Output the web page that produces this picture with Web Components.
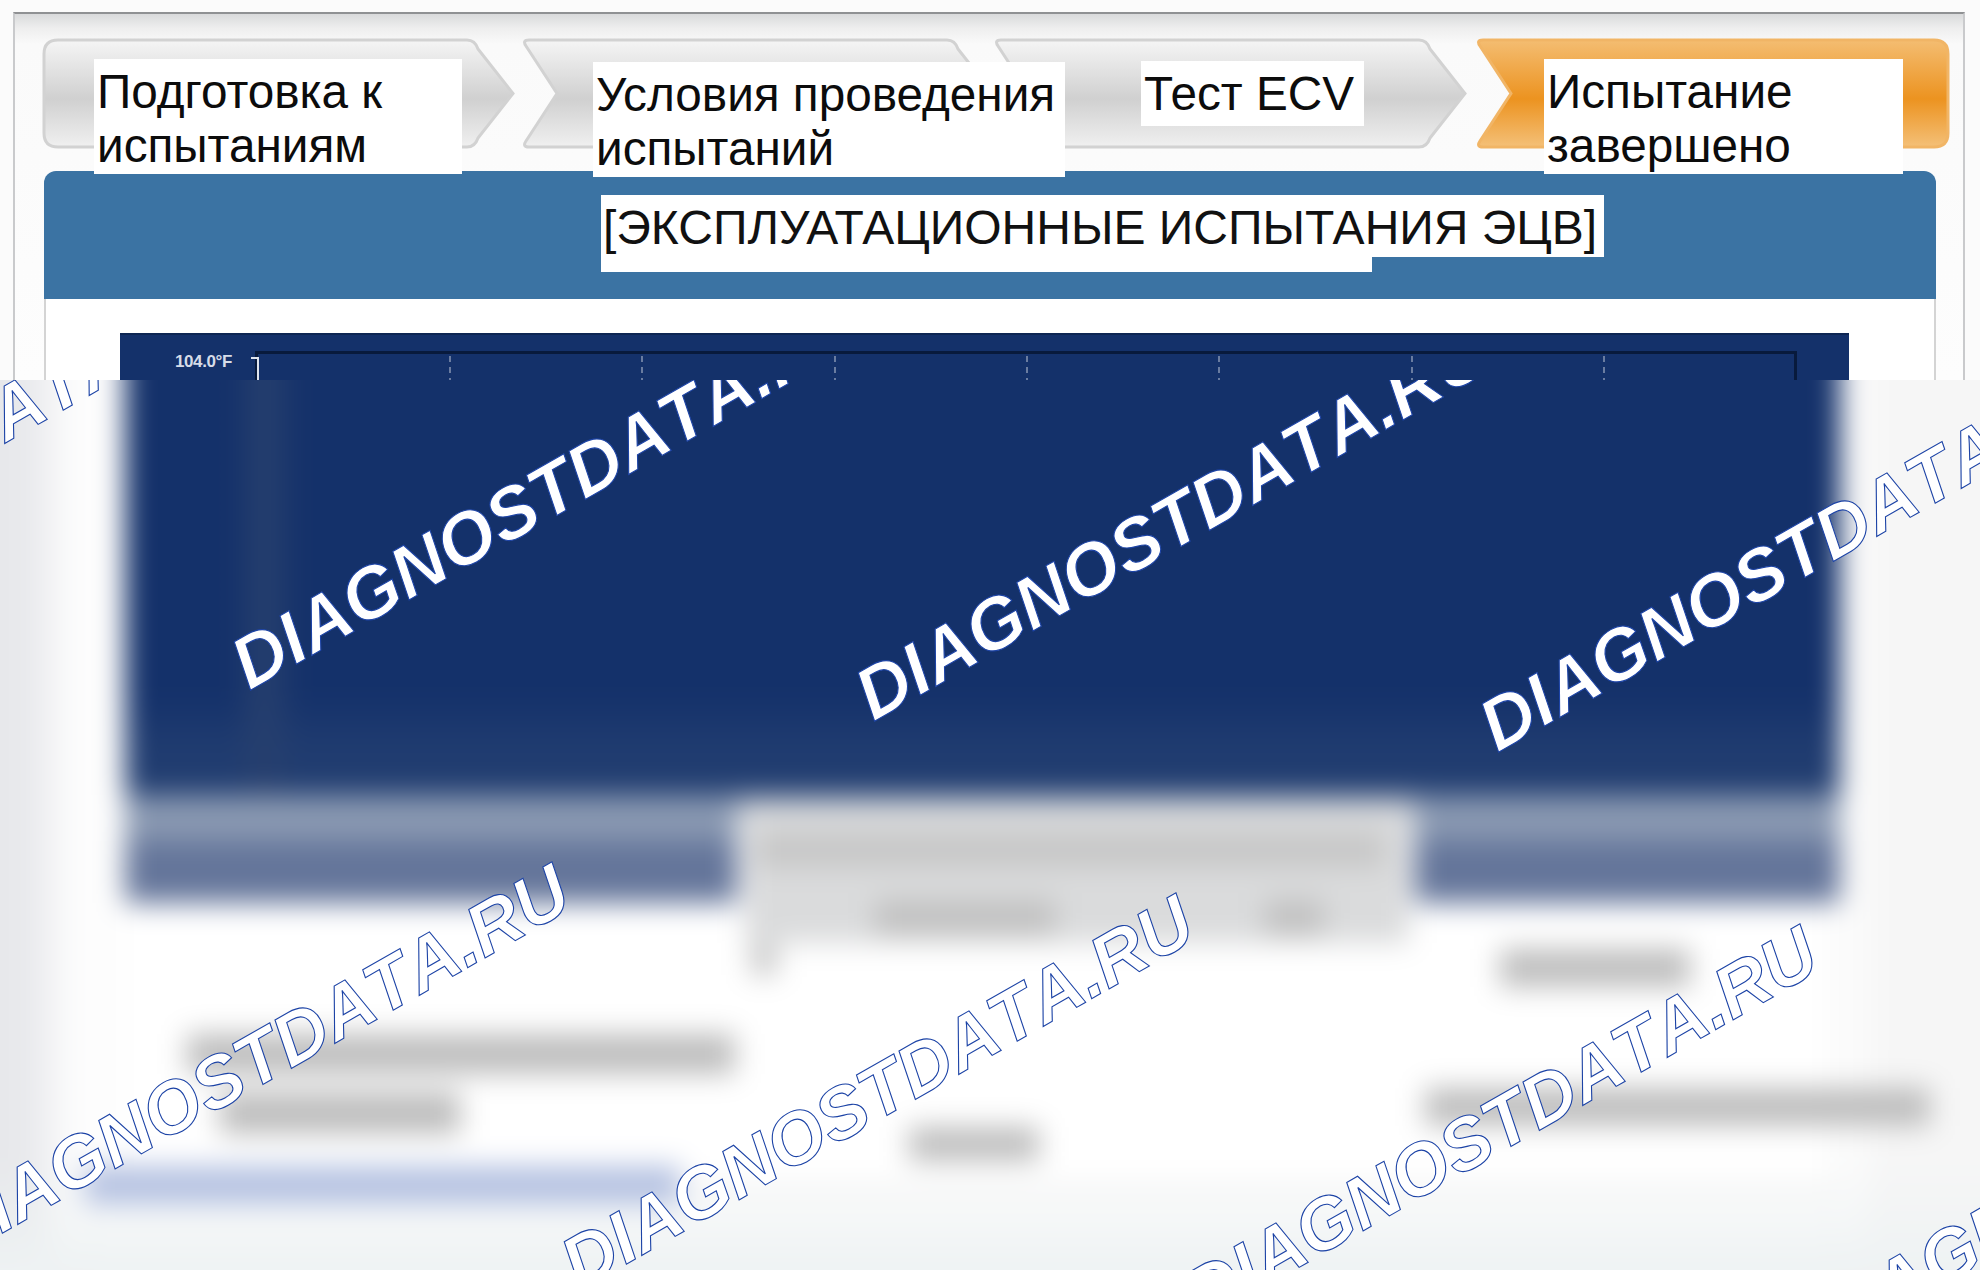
<!DOCTYPE html>
<html lang="ru">
<head>
<meta charset="utf-8">
<title>Эксплуатационные испытания ЭЦВ</title>
<style>
  html, body { margin:0; padding:0; background:#fbfbfb; }
  body { width:1980px; height:1270px; overflow:hidden; font-family:"Liberation Sans", Arial, sans-serif; }
</style>
</head>
<body>
<report-page>
  <report-steps slot="steps">
    <step-chevron width="469" kind="first" lx="50" ly="19" lw="368" lh="115">Подготовка к<br>испытаниям</step-chevron>
    <step-chevron width="470" kind="mid" lx="70" ly="22" lw="472" lh="115" gap="10">Условия проведения<br>испытаний</step-chevron>
    <step-chevron width="470" kind="mid" lx="146" ly="21" lw="223" lh="65" gap="2">Тест ECV</step-chevron>
    <step-chevron width="471" kind="last" lx="67" ly="19" lw="359" lh="115" gap="12">Испытание<br>завершено</step-chevron>
  </report-steps>
  <panel-head slot="head">[ЭКСПЛУАТАЦИОННЫЕ ИСПЫТАНИЯ ЭЦВ]</panel-head>
  <chart-top slot="chart"></chart-top>

  <blur-zone slot="blur">
    <water-mark x="-375" y="659"></water-mark>
    <water-mark x="249" y="690"></water-mark>
    <water-mark x="873" y="721"></water-mark>
    <water-mark x="1497" y="752"></water-mark>
    <water-mark x="-45" y="1259"></water-mark>
    <water-mark x="579" y="1290"></water-mark>
    <water-mark x="1203" y="1321"></water-mark>
    <water-mark x="1827" y="1352"></water-mark>
  </blur-zone>
</report-page>

<script>
// top part of the page, sharp, then the blurred rest
class ReportPage extends HTMLElement {
  constructor() {
    super();
    this.attachShadow({ mode: 'open' });
    this.shadowRoot.innerHTML = `
      <style>
        :host { display:block; width:1980px; height:1270px; overflow:hidden; }
        .top { height:380px; box-sizing:border-box; padding:12px 15px 0 13px; overflow:hidden; background:#fbfbfb; }
        .frame {
          height:368px; box-sizing:border-box; padding:24px 17px 0 29px;
          border:solid #c9cacc; border-width:2px 2px 0 2px; border-top-color:#8f9193;
          background:linear-gradient(180deg,#d9dadb 0,#eeeeee 14px,#fafafa 30px,#fdfdfd 100%);
        }
        .body {
          height:83px; margin-right:10px; box-sizing:border-box; padding:34px 0 0 74px;
          background:#fff; border-left:2px solid #d4d4d4; border-right:2px solid #d4d4d4;
        }
      </style>
      <div class="top">
        <div class="frame">
          <slot name="steps"></slot>
          <slot name="head"></slot>
          <div class="body"><slot name="chart"></slot></div>
        </div>
      </div>
      <slot name="blur"></slot>
    `;
  }
}

class ReportSteps extends HTMLElement {
  constructor() {
    super();
    this.attachShadow({ mode: 'open' });
    this.shadowRoot.innerHTML = `
      <style>:host { display:flex; height:109px; margin-bottom:24px; }</style>
      <slot></slot>
    `;
  }
}

// one arrow of the wizard, the white box with its text sits on top
class StepChevron extends HTMLElement {
  constructor() {
    super();
    this.attachShadow({ mode: 'open' });
  }

  connectedCallback() {
    const w = +this.getAttribute('width');
    const kind = this.getAttribute('kind');
    const h = 107, m = 53.5, r = 14, tip = 46, notch = 34;
    const tail = `H${w - tip} Q${w - tip + 8} 0 ${w - tip + 11} 9 L${w} ${m} L${w - tip + 11} ${h - 9} Q${w - tip + 8} ${h} ${w - tip} ${h}`;
    let d;
    if (kind === 'first') {
      d = `M${r} 0 ${tail} H${r} Q0 ${h} 0 ${h - r} V${r} Q0 0 ${r} 0Z`;
    } else if (kind === 'mid') {
      d = `M6 0 ${tail} H6 Q-1 ${h} 3 ${h - 6} L${notch} ${m} L3 6 Q-1 0 6 0Z`;
    } else {
      d = `M6 0 H${w - r} Q${w} 0 ${w} ${r} V${h - r} Q${w} ${h} ${w - r} ${h} H6 Q-1 ${h} 3 ${h - 6} L${notch} ${m} L3 6 Q-1 0 6 0Z`;
    }
    const stops = kind === 'last'
      ? '<stop offset="0" stop-color="#f4bd72"/><stop offset=".55" stop-color="#ec9320"/><stop offset="1" stop-color="#f4c078"/>'
      : '<stop offset="0" stop-color="#f5f5f5"/><stop offset=".55" stop-color="#d0d0d0"/><stop offset="1" stop-color="#f0f0f0"/>';
    const line = kind === 'last' ? '#f1b566' : '#d2d2d2';
    this.shadowRoot.innerHTML = `
      <style>
        :host {
          display:block; flex:none; position:relative; height:107px; box-sizing:border-box;
          width:${w}px; margin:2px 0 0 ${this.getAttribute('gap') || 0}px;
          padding:${this.getAttribute('ly')}px 0 0 ${this.getAttribute('lx')}px;
        }
        svg { position:absolute; left:0; top:0; overflow:visible; }
        .label {
          position:relative; z-index:2; box-sizing:border-box; background:#fff; color:#0c0c0c;
          width:${this.getAttribute('lw')}px; height:${this.getAttribute('lh')}px;
          padding:6px 0 0 3px; font:47.7px/54px "Liberation Sans", Arial, sans-serif; white-space:nowrap;
        }
      </style>
      <svg width="${w}" height="${h}" viewBox="0 0 ${w} ${h}">
        <defs><linearGradient id="g" x1="0" y1="0" x2="0" y2="1">${stops}</linearGradient></defs>
        <path d="${d}" fill="url(#g)" stroke="${line}" stroke-width="3"/>
      </svg>
      <div class="label"><slot></slot></div>
    `;
  }
}

class PanelHead extends HTMLElement {
  constructor() {
    super();
    this.attachShadow({ mode: 'open' });
    this.shadowRoot.innerHTML = `
      <style>
        :host {
          display:block; height:128px; margin-right:10px; box-sizing:border-box; padding:24px 0 0 557px;
          background:#3b73a3; border-radius:12px 12px 0 0;
        }
        .title { display:inline-block; position:relative; z-index:1; }
        .text {
          background:#fff; color:#111; height:62px; box-sizing:border-box; width:1003px;
          padding-left:2px; font:48px/66px "Liberation Sans", Arial, sans-serif; white-space:nowrap;
        }
        .tail { background:#fff; width:771px; height:15px; }
      </style>
      <div class="title">
        <div class="text"><slot></slot></div>
        <div class="tail"></div>
      </div>
    `;
  }
}

// the part of the chart above the blur
class ChartTop extends HTMLElement {
  constructor() {
    super();
    this.attachShadow({ mode: 'open' });
    const ticks = [193, 192, 193, 192, 192, 193, 192]
      .map(w => `<i style="width:${w}px"></i>`).join('');
    this.shadowRoot.innerHTML = `
      <style>
        :host {
          display:flex; width:1729px; height:47px; box-sizing:border-box; padding:16px 52px 0 55px;
          background:#14316a; border-top:2px solid #0e2653;
        }
        .axis {
          width:80px; flex:none; color:#d6dce8; font:bold 17px/17px "Liberation Sans", Arial, sans-serif;
          padding-top:2px; white-space:nowrap; letter-spacing:-.4px;
        }
        .plot { flex:1; display:flex; border:solid #081a3c; border-width:3px 3px 0 3px; position:relative; }
        .plot::before {
          content:""; width:6px; height:22px; border:solid #dfe4ee; border-width:2px 2px 0 0;
          position:absolute; left:-7px; top:3px;
        }
        i {
          display:block; flex:none; height:28px; position:relative;
        }
        i::after {
          content:""; position:absolute; right:0; top:2px; bottom:0; width:2px;
          background:repeating-linear-gradient(180deg,#6a7ca0 0 6px,transparent 6px 11px);
        }
      </style>
      <div class="axis">104.0°F</div>
      <div class="plot">${ticks}</div>
    `;
  }
}

// everything below y=380 is unreadable in the reference, so it is a blurred layout
class BlurZone extends HTMLElement {
  constructor() {
    super();
    this.attachShadow({ mode: 'open' });
    this.shadowRoot.innerHTML = `
      <style>
        :host { display:block; position:relative; height:890px; overflow:hidden; background:#fbfbfb; }
        .soft {
          width:2060px; height:970px; margin:-40px; box-sizing:border-box; padding:0 0 0 165px;
          filter:blur(14px);
          background:
            linear-gradient(180deg,rgba(238,242,243,0) 0,rgba(238,242,243,0) 820px,#eef2f3 930px),
            linear-gradient(90deg,#e6e7ea 0,#e8e9ec 70px,#fdfdfd 112px,#fdfdfd 1890px,#f6f6f6 1920px,#f6f6f6 100%);
        }
        .chart {
          width:1715px; height:455px; background:
            linear-gradient(90deg,transparent 112px,#263f6e 130px,#263f6e 145px,transparent 172px),
            linear-gradient(180deg,#14316a 0,#14316a 78%,#203c70 90%,#213d70 100%);
        }
        .table {
          width:1715px; height:395px; display:grid; grid-template-columns:612px 678px 425px;
          border-bottom:6px solid #ececec; border-right:6px solid #f2f2f2; box-sizing:border-box; background:#fff;
        }
        .light { height:46px; background:#8a99b2; }
        .dark { height:62px; background:#64759a; }
        .col { min-width:0; }
        .mid { background:linear-gradient(180deg,#a9b2c2 0,#d0d3d8 22px,transparent 23px); padding-top:12px; }
        .mid .head {
          height:136px; background:#dadbdc; margin:0 6px 0 8px; padding:26px 10px 0; box-sizing:border-box;
          display:flex; flex-direction:column; gap:34px;
        }
        .bar { height:34px; background:#bdbdbd; }
        .row { display:flex; gap:210px; margin-left:120px; }
        .pale { background:#c6c6c6; }
        .blue { background:#b4c1e1; height:38px; }
      </style>
      <div class="soft">
        <div class="chart"></div>
        <div class="table">
          <div class="col">
            <div class="light"></div>
            <div class="dark"></div>
            <div class="bar" style="width:548px;margin:131px 0 0 62px;height:40px"></div>
            <div class="bar" style="width:240px;margin:18px 0 0 95px;height:42px"></div>
            <div class="blue" style="width:595px;margin:32px 0 0 -40px"></div>
          </div>
          <div class="col mid">
            <div class="head">
              <div class="bar pale" style="width:630px"></div>
              <div class="row">
                <div class="bar" style="width:180px;background:#c0c0c0"></div>
                <div class="bar" style="width:58px;background:#c0c0c0"></div>
              </div>
            </div>
            <div class="bar pale" style="width:26px;height:30px;margin:2px 0 0 14px"></div>
            <div class="bar" style="width:130px;margin:152px 0 0 172px"></div>
          </div>
          <div class="col">
            <div class="light"></div>
            <div class="dark"></div>
            <div class="bar" style="width:190px;margin:46px 0 0 85px;height:38px"></div>
            <div class="bar" style="width:505px;margin:101px 0 0 10px;height:38px"></div>
          </div>
        </div>
      </div>
      <slot></slot>
    `;
  }
}

// x,y = page position of the baseline start of the text
class WaterMark extends HTMLElement {
  constructor() {
    super();
    this.attachShadow({ mode: 'open' });
  }

  connectedCallback() {
    const x = +this.getAttribute('x');
    const y = +this.getAttribute('y') - 380;
    this.shadowRoot.innerHTML = `
      <style>
        :host { position:absolute; left:0; top:0; transform-origin:0 0; transform:translate(${x}px,${y}px) rotate(-29.7deg); }
        span {
          display:block; margin-top:-64px; font:italic bold 73px/80px "Liberation Sans", Arial, sans-serif;
          font-kerning:none; color:#fff; -webkit-text-stroke:1.1px #1c43a6; white-space:nowrap;
        }
      </style>
      <span>DIAGNOSTDATA.RU</span>
    `;
  }
}

customElements.define('report-page', ReportPage);
customElements.define('report-steps', ReportSteps);
customElements.define('step-chevron', StepChevron);
customElements.define('panel-head', PanelHead);
customElements.define('chart-top', ChartTop);
customElements.define('blur-zone', BlurZone);
customElements.define('water-mark', WaterMark);
</script>
</body>
</html>
